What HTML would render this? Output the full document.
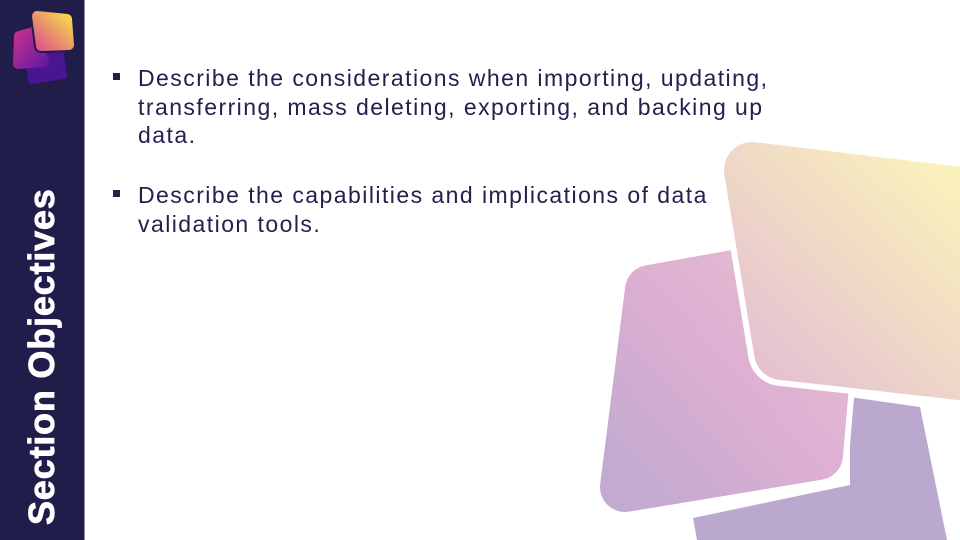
<!DOCTYPE html>
<html><head><meta charset="utf-8"><style>
html,body{margin:0;padding:0}
body{width:960px;height:540px;position:relative;overflow:hidden;background:#fff;font-family:"Liberation Sans",sans-serif}
.side{position:absolute;left:0;top:0;width:84px;height:540px;background:#211d4b;border-right:1px solid #8a89a6}
.vt{position:absolute;left:42px;top:525px;transform-origin:0 0;transform:rotate(-90deg) translate(0,-50%);color:#fff;font-weight:bold;font-size:36px;white-space:nowrap;letter-spacing:0.8px;line-height:1;-webkit-text-stroke:0.8px #fff}
svg{position:absolute;left:0;top:0}
.txt{position:absolute;left:138px;color:#24204e;font-size:23px;line-height:28.5px;letter-spacing:1.45px;margin:0;white-space:nowrap}
.b{position:absolute;left:113px;width:7px;height:7px;background:#24204e}
</style></head><body>
<svg width="960" height="540" viewBox="0 0 960 540">
<defs>
<linearGradient id="gt" x1="1" y1="0" x2="0" y2="1"><stop offset="0" stop-color="#fbf3ba"/><stop offset="1" stop-color="#e4bfd2"/></linearGradient>
<linearGradient id="gm" x1="1" y1="0" x2="0" y2="1"><stop offset="0" stop-color="#e6c0cf"/><stop offset="0.5" stop-color="#ddafd2"/><stop offset="1" stop-color="#c2aad0"/></linearGradient>
<linearGradient id="lt" x1="1" y1="0" x2="0" y2="1"><stop offset="0" stop-color="#f5d84a"/><stop offset="1" stop-color="#e0588a"/></linearGradient>
<linearGradient id="lm" x1="0" y1="0" x2="1" y2="1"><stop offset="0" stop-color="#c0308f"/><stop offset="1" stop-color="#6a1aa0"/></linearGradient>
</defs>
<polygon points="693,518 850,485 850,397 920,407 947,540 697,540" fill="#bba8cf"/>
<polygon points="650,290 835,257 818,455 625,487" fill="url(#gm)" stroke="#fff" stroke-width="62" stroke-linejoin="round"/>
<polygon points="650,290 835,257 818,455 625,487" fill="url(#gm)" stroke="url(#gm)" stroke-width="50" stroke-linejoin="round"/>
<polygon points="752,170 960,195 960,372 782,352" fill="#fff" stroke="#fff" stroke-width="68" stroke-linejoin="round"/>
<polygon points="752,170 960,195 960,372 782,352" fill="url(#gt)" stroke="url(#gt)" stroke-width="56" stroke-linejoin="round"/>
</svg>
<div class="side"></div>
<svg width="84" height="90" viewBox="0 0 84 90">
<polygon points="30,60 60,55 63,75 32,80" fill="#4a1590" stroke="#4a1590" stroke-width="8" stroke-linejoin="round"/>
<polygon points="19,36 33,32 44,62 18,64" fill="url(#lm)" stroke="url(#lm)" stroke-width="10" stroke-linejoin="round"/>
<polygon points="37,16 67,19 69,45 41,46" fill="#211d4b" stroke="#211d4b" stroke-width="14" stroke-linejoin="round"/>
<polygon points="37,16 67,19 69,45 41,46" fill="url(#lt)" stroke="url(#lt)" stroke-width="10" stroke-linejoin="round"/>
</svg>
<div class="vt">Section Objectives</div>
<div class="b" style="top:73px"></div>
<p class="txt" style="top:64px">Describe the considerations when importing, updating,<br>transferring, mass deleting, exporting, and backing up<br>data.</p>
<div class="b" style="top:190px"></div>
<p class="txt" style="top:181px">Describe the capabilities and implications of data<br>validation tools.</p>
</body></html>
